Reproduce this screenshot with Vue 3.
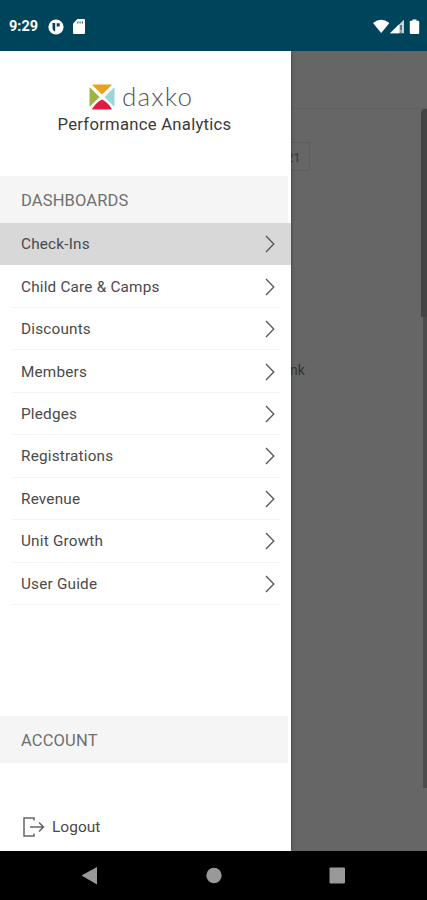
<script setup>
const dashboards = [
  'Check-Ins',
  'Child Care & Camps',
  'Discounts',
  'Members',
  'Pledges',
  'Registrations',
  'Revenue',
  'Unit Growth',
  'User Guide',
]
</script>

<template>
  <div class="screen">
    <header class="status">
      <span class="time">9:29</span>
      <svg class="app-icon" width="16" height="16" viewBox="0 0 16 16">
        <circle cx="8" cy="8" r="7.6" fill="#fff" />
        <path d="M4.500 4h2.700v8.500C5.500 12 4.500 10.800 4.500 9zM8.700 4.200h3v3.400h-3z" fill="#0b3b4e" />
      </svg>
      <svg class="sd-icon" width="12" height="15" viewBox="0 0 12 15">
        <path d="M4.500 0H11q1 0 1 1v13q0 1-1 1H1q-1 0-1-1V4.500z" fill="#fff" />
        <path d="M4.800 2.500v2M7.100 2.500v2M9.400 2.500v2" stroke="#42606d" stroke-width="1.200" />
      </svg>
      <svg class="signals" width="48" height="16" viewBox="0 0 48 16">
        <path d="M0 4Q8.200-2.400 16.400 4L8.200 14z" fill="#fff" />
        <path d="M17 14.300L31 .8v13.500z" fill="#c9d2d6" />
        <path d="M17 14.300L26 5.600v8.700z" fill="#fff" />
        <path d="M28 6v5.500M28 12.500v1.200" stroke="#34596a" stroke-width="1.500" />
        <path d="M39.500.5h4v1.300h1.700q1 0 1 1V14q0 1-1 1h-7.400q-1 0-1-1V2.800q0-1 1-1h1.700z" fill="#fff" />
      </svg>
    </header>

    <main class="body">
      <section class="page">
        <div class="page-bar"></div>
        <div class="page-content">
          <div class="date">21</div>
          <div class="snippet">nk</div>
        </div>
        <div class="scroll">
          <div class="thumb"></div>
          <div class="track"></div>
        </div>
      </section>

      <aside class="drawer">
        <div class="brand">
          <div class="logo">
            <svg width="26" height="26" viewBox="0 0 26 26">
              <path d="M4 .5h18q1 0 .3 1L13 10.500 3.700 1.500Q3 .5 4 .5z" fill="#e8a21c" />
              <path d="M.5 4.500q0-1.500 1-.6L10.500 13 1.500 22.100q-1 .9-1-.6z" fill="#9bb544" />
              <path d="M25.500 4.500q0-1.500-1-.6L15.500 13l9 9.100q1 .9 1-.6z" fill="#9ad7d8" />
              <path d="M4 25.500q-1 0-.4-1.200Q7.500 18 13 15.500q5.500 2.500 9.400 8.800.6 1.200-.4 1.200z" fill="#df1d43" />
            </svg>
            <span class="word">daxko</span>
          </div>
          <div class="product">Performance Analytics</div>
        </div>
        <h2 class="heading">DASHBOARDS</h2>
        <nav class="list">
          <a v-for="(name, i) in dashboards" :key="name" class="row" :class="{ active: i === 0 }">
            <span>{{ name }}</span>
            <svg width="10" height="18" viewBox="0 0 10 18">
              <path d="M1 1l7.800 8L1 17" fill="none" stroke="#555" stroke-width="1.300" />
            </svg>
          </a>
        </nav>
        <h2 class="heading account">ACCOUNT</h2>
        <a class="logout">
          <svg width="22" height="20" viewBox="0 0 22 20">
            <path d="M11 3.500V1H1v18h10v-2.500M7 10h13M16 5.500l4.500 4.500-4.500 4.500" fill="none" stroke="#666" stroke-width="1.500" />
          </svg>
          <span>Logout</span>
        </a>
      </aside>
    </main>

    <footer class="keys">
      <svg width="427" height="49" viewBox="0 0 427 49">
        <path d="M81.500 24.500L97 16v17.500z" fill="#999" />
        <circle cx="214" cy="24.500" r="7.700" fill="#999" />
        <rect x="329.500" y="16.500" width="15.500" height="16" rx="1" fill="#999" />
      </svg>
    </footer>
  </div>
</template>

<style>
body {
  margin: 0;
}
</style>

<style scoped>
.screen {
  width: 427px;
  height: 900px;
  display: flex;
  flex-direction: column;
  overflow: hidden;
  font-family: Roboto, "Liberation Sans", sans-serif;
  color: #4a4a4a;
}
.status {
  flex: none;
  height: 51px;
  box-sizing: border-box;
  padding: 2px 6px 0 9px;
  display: flex;
  align-items: center;
  background: #00445b;
}
.time {
  width: 39px;
  color: #fff;
  font-size: 14.5px;
  font-weight: 700;
}
.sd-icon {
  margin-left: 9px;
}
.signals {
  margin-left: auto;
}
.body {
  flex: none;
  position: relative;
  height: 800px;
}
.page {
  height: 800px;
  display: grid;
  grid-template-columns: 1fr 6px;
  grid-template-rows: 58px 1fr;
  background: #666;
}
.page-bar {
  grid-column: 1 / 3;
  border-bottom: 1px solid #5f5f5f;
}
.page-content {
  padding: 33px 0 0 270px;
}
.date {
  width: 38px;
  height: 27px;
  border: 1px solid #5d5d5d;
  border-radius: 2px;
  text-indent: 15px;
  line-height: 30px;
  font-size: 13px;
  color: #3a3a3a;
}
.snippet {
  margin: 189px 0 0 20px;
  font-size: 14px;
  line-height: 20px;
  color: #333;
}
.scroll {
  display: flex;
  flex-direction: column;
  align-items: flex-end;
}
.thumb {
  width: 6px;
  height: 208px;
  background: #444;
  border-radius: 4px 0 0 0;
}
.track {
  width: 4px;
  height: 471px;
  background: #4c4c4c;
}
.drawer {
  position: absolute;
  left: 0;
  top: 0;
  width: 291px;
  height: 800px;
  display: flex;
  flex-direction: column;
  background: #fff;
  box-shadow: 0 0 3px #333;
  clip-path: inset(0 -6px 0 0);
}
.brand {
  height: 125px;
  box-sizing: border-box;
  padding-top: 31px;
  text-align: center;
}
.logo {
  height: 30px;
  display: flex;
  align-items: center;
  padding-left: 89px;
}
.word {
  margin-left: 7px;
  padding-bottom: 2px;
  font-family: Lato, sans-serif;
  font-weight: 300;
  font-size: 26px;
  letter-spacing: 1.2px;
  line-height: 28px;
  color: #555;
}
.product {
  padding: 1px 2px 0 0;
  font-size: 16.7px;
  line-height: 24px;
  letter-spacing: 0.25px;
  color: #3a3a3a;
}
.heading {
  width: 288px;
  height: 47px;
  box-sizing: border-box;
  margin: 0;
  padding: 1px 0 0 21px;
  font-size: 16.5px;
  letter-spacing: 0.15px;
  font-weight: 400;
  line-height: 47px;
  color: #707070;
  background: #f5f5f5;
}
.list {
  height: 382px;
  display: grid;
  grid-template-rows: repeat(9, 1fr);
}
.row {
  box-sizing: border-box;
  margin-left: 12px;
  margin-right: 11px;
  padding: 1px 5px 0 9px;
  display: flex;
  align-items: center;
  justify-content: space-between;
  border-bottom: 1px solid #f3f3f3;
  font-size: 15.3px;
  letter-spacing: 0.2px;
}
.active {
  margin: 0;
  padding: 1px 16px 0 21px;
  background: #d8d8d8;
  border-color: #d8d8d8;
}
.account {
  margin-top: 111px;
}
.logout {
  display: flex;
  align-items: center;
  gap: 7px;
  margin: 54px 0 0 23px;
  font-size: 15.5px;
}
.keys {
  flex: none;
  height: 49px;
  background: #000;
}
</style>
